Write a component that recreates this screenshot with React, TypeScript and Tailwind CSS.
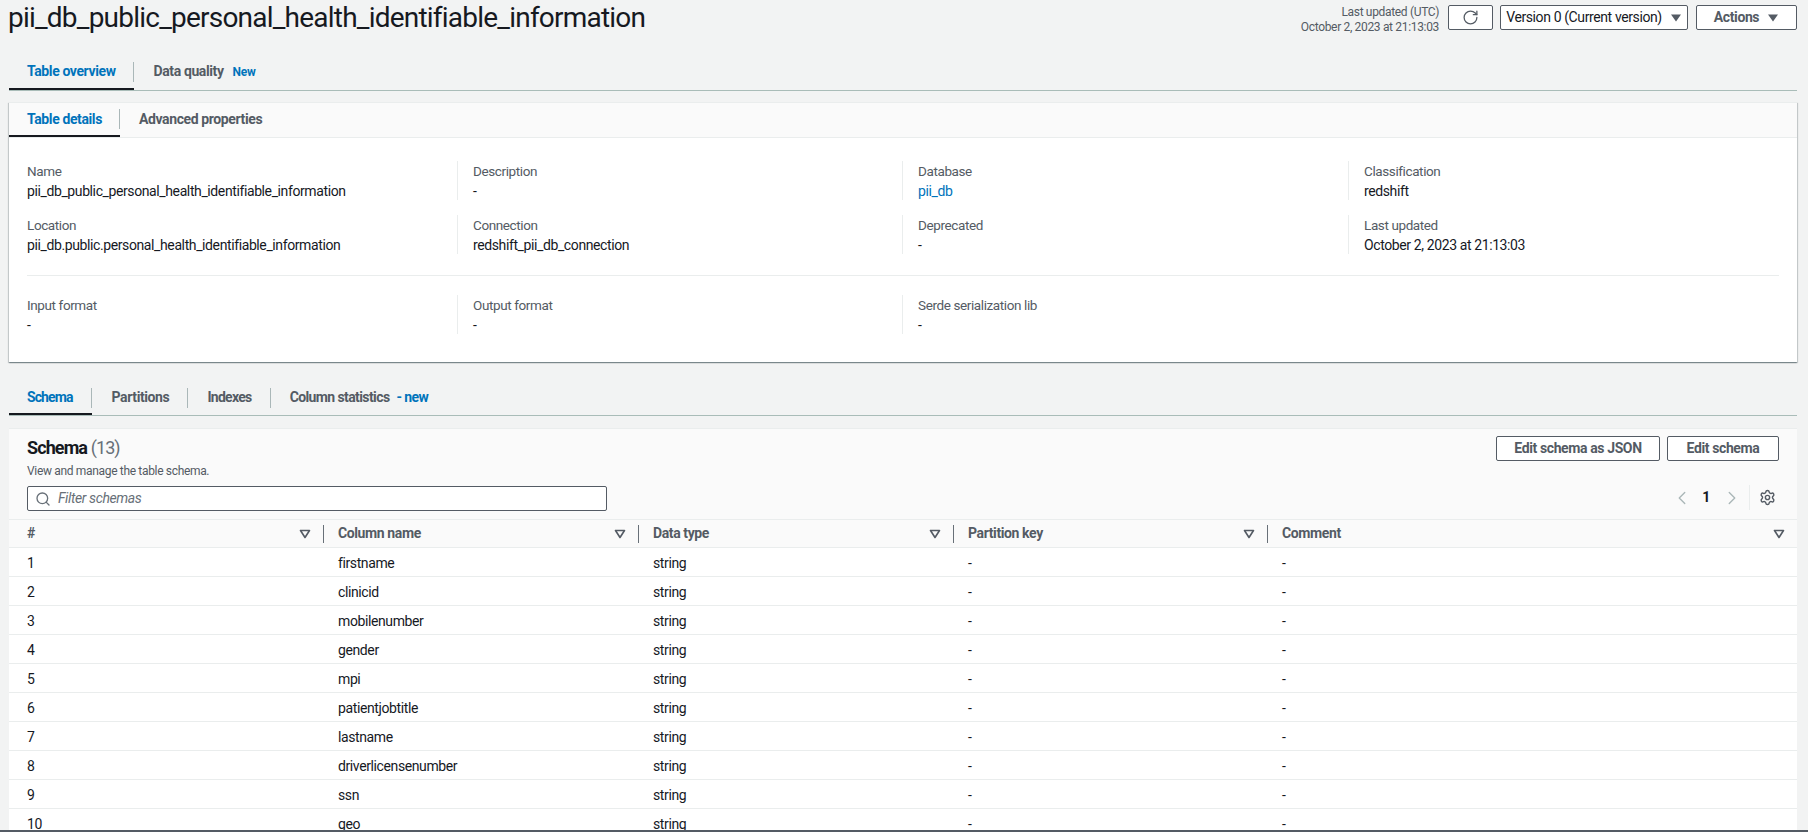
import { ChevronLeft, ChevronRight, RotateCw, Search, Settings } from "lucide-react";

const rows = [
  "firstname",
  "clinicid",
  "mobilenumber",
  "gender",
  "mpi",
  "patientjobtitle",
  "lastname",
  "driverlicensenumber",
  "ssn",
  "geo",
];

const columns = ["#", "Column name", "Data type", "Partition key", "Comment"];

function CaretDown() {
  return (
    <svg width="12" height="8" viewBox="0 0 12 8" className="ml-2">
      <path d="M1 0.5h10L6 7.5z" fill="#545b64" />
    </svg>
  );
}

function FilterCaret() {
  return (
    <svg width="12" height="10" viewBox="0 0 12 10">
      <path d="M1.5 1.5h9L6 8.5z" fill="none" stroke="#545b64" strokeWidth="1.6" strokeLinejoin="round" />
    </svg>
  );
}

function Tab({ label, active, last, badge, className = "pl-[18px]", textClass = "pr-[18px]" }: { label: string; active?: boolean; last?: boolean; badge?: React.ReactNode; className?: string; textClass?: string }) {
  return (
    <div className={`flex h-full items-center ${active ? "border-b-2 border-[#16191f]" : "border-b-2 border-transparent"} ${className}`}>
      <span className={`flex items-center whitespace-nowrap font-bold text-[14px] ${active ? "text-[#0073bb]" : "text-[#545b64]"} ${last ? "" : "h-[20px] border-r border-[#aab7b8]"} ${textClass}`}>
        {label}
        {badge}
      </span>
    </div>
  );
}

function Field({ label, value, link, first }: { label: string; value: string; link?: boolean; first?: boolean }) {
  return (
    <div className={`flex h-[39px] flex-col justify-between ${first ? "" : "-ml-[16px] border-l border-[#eaeded] pl-[15px]"}`}>
      <div className="text-[13.5px] leading-[20px] text-[#545b64]">{label}</div>
      <div className={`text-[14px] leading-[20px] ${link ? "text-[#0073bb]" : "text-[#16191f]"}`}>{value}</div>
    </div>
  );
}

export default function App() {
  return (
    <div className="relative h-[832px] w-[1808px] overflow-hidden bg-[#f2f3f3] font-['Roboto',sans-serif] tracking-[-0.39px] text-[#16191f]">
      <div className="pl-[9px] pr-[11px]">
        {/* Page header */}
        <div className="flex h-[50px] items-start justify-between">
          <h1 className="-ml-px text-[28px] leading-[36px] tracking-[-0.78px]">pii_db_public_personal_health_identifiable_information</h1>
          <div className="flex items-start pt-[5px]">
            <div className="mr-[9px] text-right text-[12px] leading-[15px] tracking-[-0.33px] text-[#545b64]">
              <div>Last updated (UTC)</div>
              <div>October 2, 2023 at 21:13:03</div>
            </div>
            <button className="flex h-[25px] w-[45px] items-center justify-center rounded-[2px] border border-[#545b64] bg-white">
              <RotateCw size={17} color="#545b64" strokeWidth={1.8} />
            </button>
            <button className="ml-[7px] flex h-[25px] w-[188px] items-center justify-center whitespace-nowrap rounded-[2px] border border-[#545b64] bg-white text-[14px]">
              Version 0 (Current version)
              <CaretDown />
            </button>
            <button className="ml-[8px] flex h-[25px] w-[101px] items-center justify-center rounded-[2px] border border-[#545b64] bg-white text-[14px] font-bold text-[#545b64]">
              Actions
              <CaretDown />
            </button>
          </div>
        </div>

        {/* Top tabs */}
        <div className="flex h-[41px] border-b border-[#a9bcb8]">
          <Tab label="Table overview" active className="pl-[18px] pt-[5px]" textClass="pr-[17px]" />
          <Tab
            label="Data quality"
            last
            className="pl-[20px] pt-[5px]"
            badge={<span className="ml-[9px] text-[12px] tracking-[-0.33px] text-[#0073bb]">New</span>}
          />
        </div>

        {/* Table details card */}
        <div className="mt-[11px] h-[260px] border-t border-[#eaeded] bg-white shadow-[0_1px_1px_0_rgba(0,28,36,0.3),1px_1px_1px_0_rgba(0,28,36,0.15),-1px_1px_1px_0_rgba(0,28,36,0.15)]">
          <div className="flex h-[35px] border-b border-[#eaeded] bg-[#fafafa]">
            <Tab label="Table details" active textClass="pr-[17px]" />
            <Tab label="Advanced properties" last className="pl-[19px]" />
          </div>
          <div className="px-[18px] pt-[23px]">
            <div className="grid gap-y-[15px] [grid-template-columns:446px_445px_446px_1fr]">
              <Field first label="Name" value="pii_db_public_personal_health_identifiable_information" />
              <Field label="Description" value="-" />
              <Field label="Database" value="pii_db" link />
              <Field label="Classification" value="redshift" />
              <Field first label="Location" value="pii_db.public.personal_health_identifiable_information" />
              <Field label="Connection" value="redshift_pii_db_connection" />
              <Field label="Deprecated" value="-" />
              <Field label="Last updated" value="October 2, 2023 at 21:13:03" />
            </div>
            <div className="mt-[21px] border-t border-[#eaeded]" />
            <div className="mt-[19px] grid [grid-template-columns:446px_445px_446px_1fr]">
              <Field first label="Input format" value="-" />
              <Field label="Output format" value="-" />
              <Field label="Serde serialization lib" value="-" />
            </div>
          </div>
        </div>

        {/* Lower tabs */}
        <div className="mt-[18px] flex h-[36px] border-b border-[#a9bcb8]">
          <Tab label="Schema" active className="pl-[18px] pt-[2px]" textClass="pr-[18px] tracking-[-0.9px]" />
          <Tab label="Partitions" className="pl-[20px] pt-[2px]" />
          <Tab label="Indexes" className="pl-[19px] pt-[2px]" textClass="pr-[18px] tracking-[-0.7px]" />
          <Tab
            label="Column statistics"
            last
            className="pl-[19px] pt-[2px]"
            textClass="tracking-[-0.6px]"
            badge={<span className="ml-[7px] text-[#0073bb]">- new</span>}
          />
        </div>

        {/* Schema card */}
        <div className="mt-[12px] border-t border-[#eaeded] bg-white">
          <div className="h-[91px] border-b border-[#eaeded] bg-[#fafafa] px-[18px]">
            <div className="flex h-[49px] items-start justify-between pt-[7px]">
              <div>
                <div className="text-[18px] font-bold leading-[24px] tracking-[-0.9px]">
                  Schema <span className="font-normal text-[#687078]">(13)</span>
                </div>
                <div className="mt-[3px] text-[12px] leading-[16px] tracking-[-0.33px] text-[#545b64]">View and manage the table schema.</div>
              </div>
              <div className="flex">
                <button className="h-[25px] w-[164px] rounded-[2px] border border-[#545b64] bg-white text-[14px] font-bold text-[#545b64]">
                  Edit schema as JSON
                </button>
                <button className="ml-[7px] h-[25px] w-[112px] rounded-[2px] border border-[#545b64] bg-white text-[14px] font-bold text-[#545b64]">
                  Edit schema
                </button>
              </div>
            </div>
            <div className="mt-[8px] flex items-center justify-between">
              <div className="flex h-[25px] w-[580px] items-center rounded-[2px] border border-[#545b64] bg-white pl-[7px]">
                <Search size={16} color="#687078" strokeWidth={2} />
                <span className="ml-[7px] text-[14px] italic text-[#687078]">Filter schemas</span>
              </div>
              <div className="flex -translate-y-px items-center pr-[3px]">
                <ChevronLeft size={22} color="#aab7b8" strokeWidth={1.5} />
                <span className="ml-[9px] mr-[11px] text-[14px] font-bold">1</span>
                <ChevronRight size={22} color="#aab7b8" strokeWidth={1.5} />
                <div className="ml-[6px] flex h-[25px] items-center border-l border-[#eaeded] pl-[9px]">
                  <Settings size={17} color="#545b64" strokeWidth={2} />
                </div>
              </div>
            </div>
          </div>

          <div className="grid h-[28px] grid-cols-[314px_315px_315px_314px_1fr] items-center border-b border-[#eaeded] bg-[#fafafa]">
            {columns.map((col, i) => (
              <div key={col} className="flex items-center pr-[12px]">
                {i > 0 && <div className="mr-[14px] h-[18px] border-l border-[#687078]" />}
                <span className={`flex-1 text-[14px] font-bold text-[#545b64] ${i === 0 ? "pl-[18px]" : ""}`}>{col}</span>
                <FilterCaret />
              </div>
            ))}
          </div>

          {rows.map((name, i) => (
            <div key={name} className="grid h-[29px] grid-cols-[314px_315px_315px_314px_1fr] items-center border-b border-[#eaeded] pt-[2px] text-[14px]">
              <div className="pl-[18px]">{i + 1}</div>
              <div className="pl-[15px]">{name}</div>
              <div className="pl-[15px]">string</div>
              <div className="pl-[15px]">-</div>
              <div className="pl-[15px]">-</div>
            </div>
          ))}
        </div>
      </div>

      {/* Bottom edge of the viewport */}
      <div className="absolute bottom-0 left-0 h-[2px] w-full bg-[#545b64]" />
    </div>
  );
}
